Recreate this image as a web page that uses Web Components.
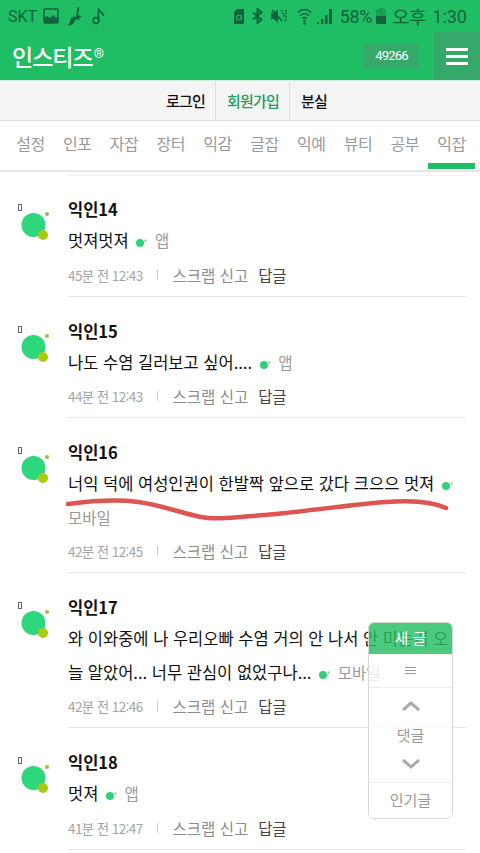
<!DOCTYPE html>
<html lang="ko"><head><meta charset="utf-8"><style>
html,body{margin:0;padding:0;background:#fff}
body{width:480px;height:853px;overflow:hidden;position:relative;font-family:"Noto Sans CJK KR","Noto Sans",sans-serif}
</style></head><body>
<app-header></app-header>
<sub-nav></sub-nav>
<tab-nav></tab-nav>
<comment-list>
<comment-item name="익인14" time="45분 전 12:43" h="122">멋져멋져 <dot-mark></dot-mark> <small-tag>앱</small-tag></comment-item>
<comment-item name="익인15" time="44분 전 12:43" h="121">나도 수염 길러보고 싶어.... <dot-mark></dot-mark> <small-tag>앱</small-tag></comment-item>
<comment-item name="익인16" time="42분 전 12:45" h="155">너익 덕에 여성인권이 한발짝 앞으로 갔다 크으으 멋져 <dot-mark></dot-mark> <small-tag>모바일</small-tag></comment-item>
<comment-item name="익인17" time="42분 전 12:46" h="155">와 이와중에 나 우리오빠 수염 거의 안 나서 안 미는거 오늘 알았어... 너무 관심이 없었구나... <dot-mark></dot-mark> <small-tag>모바일</small-tag></comment-item>
<comment-item name="익인18" time="41분 전 12:47" h="122">멋져 <dot-mark></dot-mark> <small-tag>앱</small-tag></comment-item>
</comment-list>
<red-scribble></red-scribble>
<float-panel></float-panel>
<script>
function def(tag,html){customElements.define(tag,class extends HTMLElement{constructor(){super();this.attachShadow({mode:'open'}).innerHTML=html;}});}
def('app-header',`<style>
:host{display:block;height:80px;background:#1fbe64}
.st{height:32px;display:flex;align-items:center;padding:0 13px 0 8px;font:16px "Roboto",sans-serif;color:#10633a}
.st svg{display:block;flex:none}
.sp{flex:1}
.main{height:48px;display:flex;align-items:center}
.logo{margin-left:12px;color:#fff;font:500 23px/30px "Noto Sans CJK KR",sans-serif;letter-spacing:-1px;margin-top:-1px}
.logo sup{font:500 13px/0 "Roboto",sans-serif;vertical-align:8px;margin-left:1px;letter-spacing:0}
.num{margin-left:auto;width:55px;height:24px;background:#35a86a;color:#fff;font:13px/24px "Roboto",sans-serif;letter-spacing:-.8px;text-align:center;margin-right:15px;margin-top:-1px}
.ham{width:46px;height:48px;background:#35a86a;display:flex;flex-direction:column;justify-content:center;align-items:center;gap:4px}
.ham i{display:block;width:22px;height:3px;background:#fff}
</style>
<div class="st"><span>SKT</span>
<svg style="margin-left:6px" width="16" height="16" viewBox="0 0 16 16"><rect x="1" y="1" width="14" height="14" rx="1" fill="none" stroke="#10633a" stroke-width="1.500"/><path d="M1 15v-5l3-2 3 2 3-3 2 2 3 1v5z" fill="#10633a"/></svg>
<svg style="margin-left:8px" width="16" height="20" viewBox="0 0 16 20"><path d="M10.500 1l2 .5L11 9l4 1.500-3 1.500.5 2.500-3-1.500L5 19l-5 .5 2.500-2L4 12l2.500-1.500L9 11z" fill="#10633a"/></svg>
<svg style="margin-left:9px" width="13" height="18" viewBox="0 0 13 18"><path d="M6.500 13V1.500c0 3.500 5 3.500 5 7.500" fill="none" stroke="#10633a" stroke-width="1.600"/><circle cx="4" cy="13.500" r="2.900" fill="none" stroke="#10633a" stroke-width="1.600"/></svg>
<span class="sp"></span>
<svg width="10" height="15" viewBox="0 0 10 15"><path d="M0 3l3-3h7v15H0z" fill="#10633a"/><circle cx="5" cy="8.500" r="2.500" fill="none" stroke="#1fbe64" stroke-width="1.200"/></svg>
<svg style="margin-left:8px" width="11" height="16" viewBox="0 0 11 16"><path d="M1 4.500l8.500 7L5.500 15V1l4 3.500-8.500 7" fill="none" stroke="#10633a" stroke-width="2"/></svg>
<svg style="margin-left:8px" width="16" height="16" viewBox="0 0 16 16"><path d="M0 5h3l4-4v14l-4-4H0z" fill="#10633a"/><path d="M1 2l10 11" stroke="#10633a" stroke-width="1.800"/><path d="M10 2c2 1 0 2 2 3.500S13 8 11 9M14 2c2 1 .5 3 1 5s0 5-1.500 7" fill="none" stroke="#10633a" stroke-width="1.500" stroke-dasharray="2 1"/></svg>
<svg style="margin-left:10px" width="15" height="17" viewBox="0 0 15 17"><path d="M.7 4.500c4-4 9.600-4 13.600 0M3 7.500c3-2.500 6-2.500 9 0M5.300 10.300c1.500-1 2.900-1 4.400 0" fill="none" stroke="#10633a" stroke-width="1.400"/><path d="M7.500 11.500V17" stroke="#10633a" stroke-width="2.400" stroke-dasharray="2 1"/></svg>
<svg style="margin-left:5px" width="15" height="16" viewBox="0 0 15 16"><path d="M0 16h2v-2H0zM4 16h2.500v-5H4zM8 16h2.500V7H8zM12 16h3V1h-3z" fill="#10633a"/></svg>
<span style="margin-left:8px;font-size:18px;letter-spacing:-.3px">58%</span>
<svg style="margin-left:4px" width="10" height="16" viewBox="0 0 10 16"><rect y="1" width="10" height="15" fill="#10633a" opacity=".35"/><rect x="3" width="4" height="1" fill="#10633a" opacity=".35"/><rect y="8" width="10" height="8" fill="#10633a"/></svg>
<span style="margin-left:6px;font:18.500px 'Noto Sans CJK KR',sans-serif">오후</span>
<span style="margin-left:6px;font-size:18px">1:30</span></div>
<div class="main"><span class="logo">인스티즈<sup>®</sup></span><span class="num">49266</span><span class="ham"><i></i><i></i><i></i></span></div>`);
def('sub-nav',`<style>
:host{display:flex;height:41px;box-sizing:border-box;background:#f4f4f4;border-top:1px solid #c8f0dc;border-bottom:1px solid #ddd;justify-content:flex-end;padding-right:153px;font:500 15px/39px "Noto Sans CJK KR",sans-serif;letter-spacing:-.8px;color:#111}
span{padding:0 10px 0 11px;border-right:1px solid #e0e0e0}
span:first-child{padding:0 11px 0 0}
span:last-child{border:0;padding-right:0}
.g{color:#1f9d5a}
</style><span>로그인</span><span class="g">회원가입</span><span>분실</span>`);
def('tab-nav',`<style>
:host{display:flex;height:51px;box-sizing:border-box;border-bottom:2px solid #e6e6e6;padding:0 5px 0 7px;font:16px/44px "Noto Sans CJK KR",sans-serif;letter-spacing:-.5px;color:#999}
span{flex:1;text-align:center;position:relative}
.a::after{content:"";position:absolute;left:0;right:0;bottom:1px;height:6px;background:#1fbe64}
</style><span>설정</span><span>인포</span><span>자잡</span><span>장터</span><span>익감</span><span>글잡</span><span>익예</span><span>뷰티</span><span>공부</span><span class="a">익잡</span>`);
def('comment-list',`<style>:host{display:block;padding:0 14px 0 0}
.top{margin-left:68px;border-bottom:1px solid #f1f1f1;box-sizing:border-box;height:4px;margin-bottom:10px}</style><div class="top"></div><slot></slot>`);
def('dot-mark',`<style>:host{display:inline-block;width:13px;height:10px;vertical-align:-1px;margin:0 2px 0 2px}svg{display:block}</style><svg width="13" height="10" viewBox="0 0 13 10"><circle cx="5" cy="5" r="4" fill="#2fd27a"/><circle cx="10.500" cy="2.500" r="1" fill="#7cc043"/></svg>`);
def('small-tag',`<style>:host{color:#999;font-size:15.500px}</style><slot></slot>`);
customElements.define('comment-item',class extends HTMLElement{constructor(){super();
const n=this.getAttribute('name'),t=this.getAttribute('time'),h=this.getAttribute('h');
this.attachShadow({mode:'open'}).innerHTML=`<style>
:host{display:flex;height:${h}px;box-sizing:border-box;padding-top:11px}
.av{width:68px;flex:none}
.av svg{display:block;margin:7px 0 0 14px}
.b{flex:1;display:flex;flex-direction:column;border-bottom:1px solid #e6e6e6;margin-bottom:11px;min-width:0}
.n{font:700 16.500px/24px "Noto Sans CJK KR",sans-serif;color:#111}
.c{font:16.500px/34px "Noto Sans CJK KR",sans-serif;color:#111;margin-top:2px;padding-right:8px;word-break:break-all}
.m{font:13.500px/24px "Noto Sans CJK KR",sans-serif;color:#a5a5a5;display:flex;align-items:center;margin-top:auto;margin-bottom:9px;letter-spacing:-.6px}
.m i{width:1px;height:10px;background:#ccc;margin:0 15px 0 14px}
.m b{font-weight:400;color:#8c8c8c;font-size:15.500px;letter-spacing:0}
.m u{text-decoration:none;color:#444;font-size:15.500px;letter-spacing:-.3px;margin-left:10px}
</style>
<div class="av"><svg width="40" height="40" viewBox="0 0 40 40"><rect x="4.500" y=".5" width="3" height="6" fill="#fff" stroke="#666" stroke-width="1"/><circle cx="19.500" cy="21" r="12" fill="#2ed67c"/><circle cx="29" cy="31" r="5" fill="#a6cc10"/><circle cx="33" cy="10" r="2" fill="#8cc63f"/></svg></div>
<div class="b"><div class="n">${n}</div><div class="c"><slot></slot></div><div class="m"><span>${t}</span><i></i><b>스크랩 신고</b><u>답글</u></div></div>`;}});
def('red-scribble',`<style>:host{position:absolute;left:66px;top:495px;width:384px;height:28px;display:block}</style><svg width="384" height="28" viewBox="0 0 384 28"><path d="M2 9C25 6 50 4 72 7c23 3 43 11 63 15 15 3 40 0 75-3 40-4 80-10 110-12 25-2 45-1 60 6" fill="none" stroke="#dc5550" stroke-width="4.500" stroke-linecap="round"/></svg>`);
def('float-panel',`<style>
:host{position:absolute;left:368px;top:622px;width:85px;height:197px;display:flex;flex-direction:column;box-sizing:border-box;border:1px solid #d8d8d8;border-radius:6px;font:15px "Noto Sans CJK KR",sans-serif;color:#999;text-align:center;overflow:hidden}
.new{height:32px;background:rgba(36,190,100,.82);color:#fff;line-height:31px;margin:-1px -1px 0;flex:none}
.m{height:34px;flex:none;box-sizing:border-box;display:flex;flex-direction:column;justify-content:center;align-items:center;gap:2px;border-bottom:1px solid #eee;background:rgba(255,255,255,.8)}
.m i{display:block;width:11px;height:1px;background:#999}
.mid{flex:1;display:flex;flex-direction:column;justify-content:center;align-items:center;gap:12px;border-bottom:1px solid #eee;background:rgba(255,255,255,.8)}
.mid span{line-height:22px}
.pop{height:35px;flex:none;line-height:34px;background:rgba(255,255,255,.8)}
</style><div class="new">새 글</div><div class="m"><i></i><i></i><i></i></div>
<div class="mid"><svg width="20" height="12" viewBox="0 0 20 12"><path d="M2 10l8-7 8 7" fill="none" stroke="#aaa" stroke-width="3"/></svg><span>댓글</span><svg width="20" height="12" viewBox="0 0 20 12"><path d="M2 2l8 7 8-7" fill="none" stroke="#aaa" stroke-width="3"/></svg></div>
<div class="pop">인기글</div>`);
</script></body></html>
